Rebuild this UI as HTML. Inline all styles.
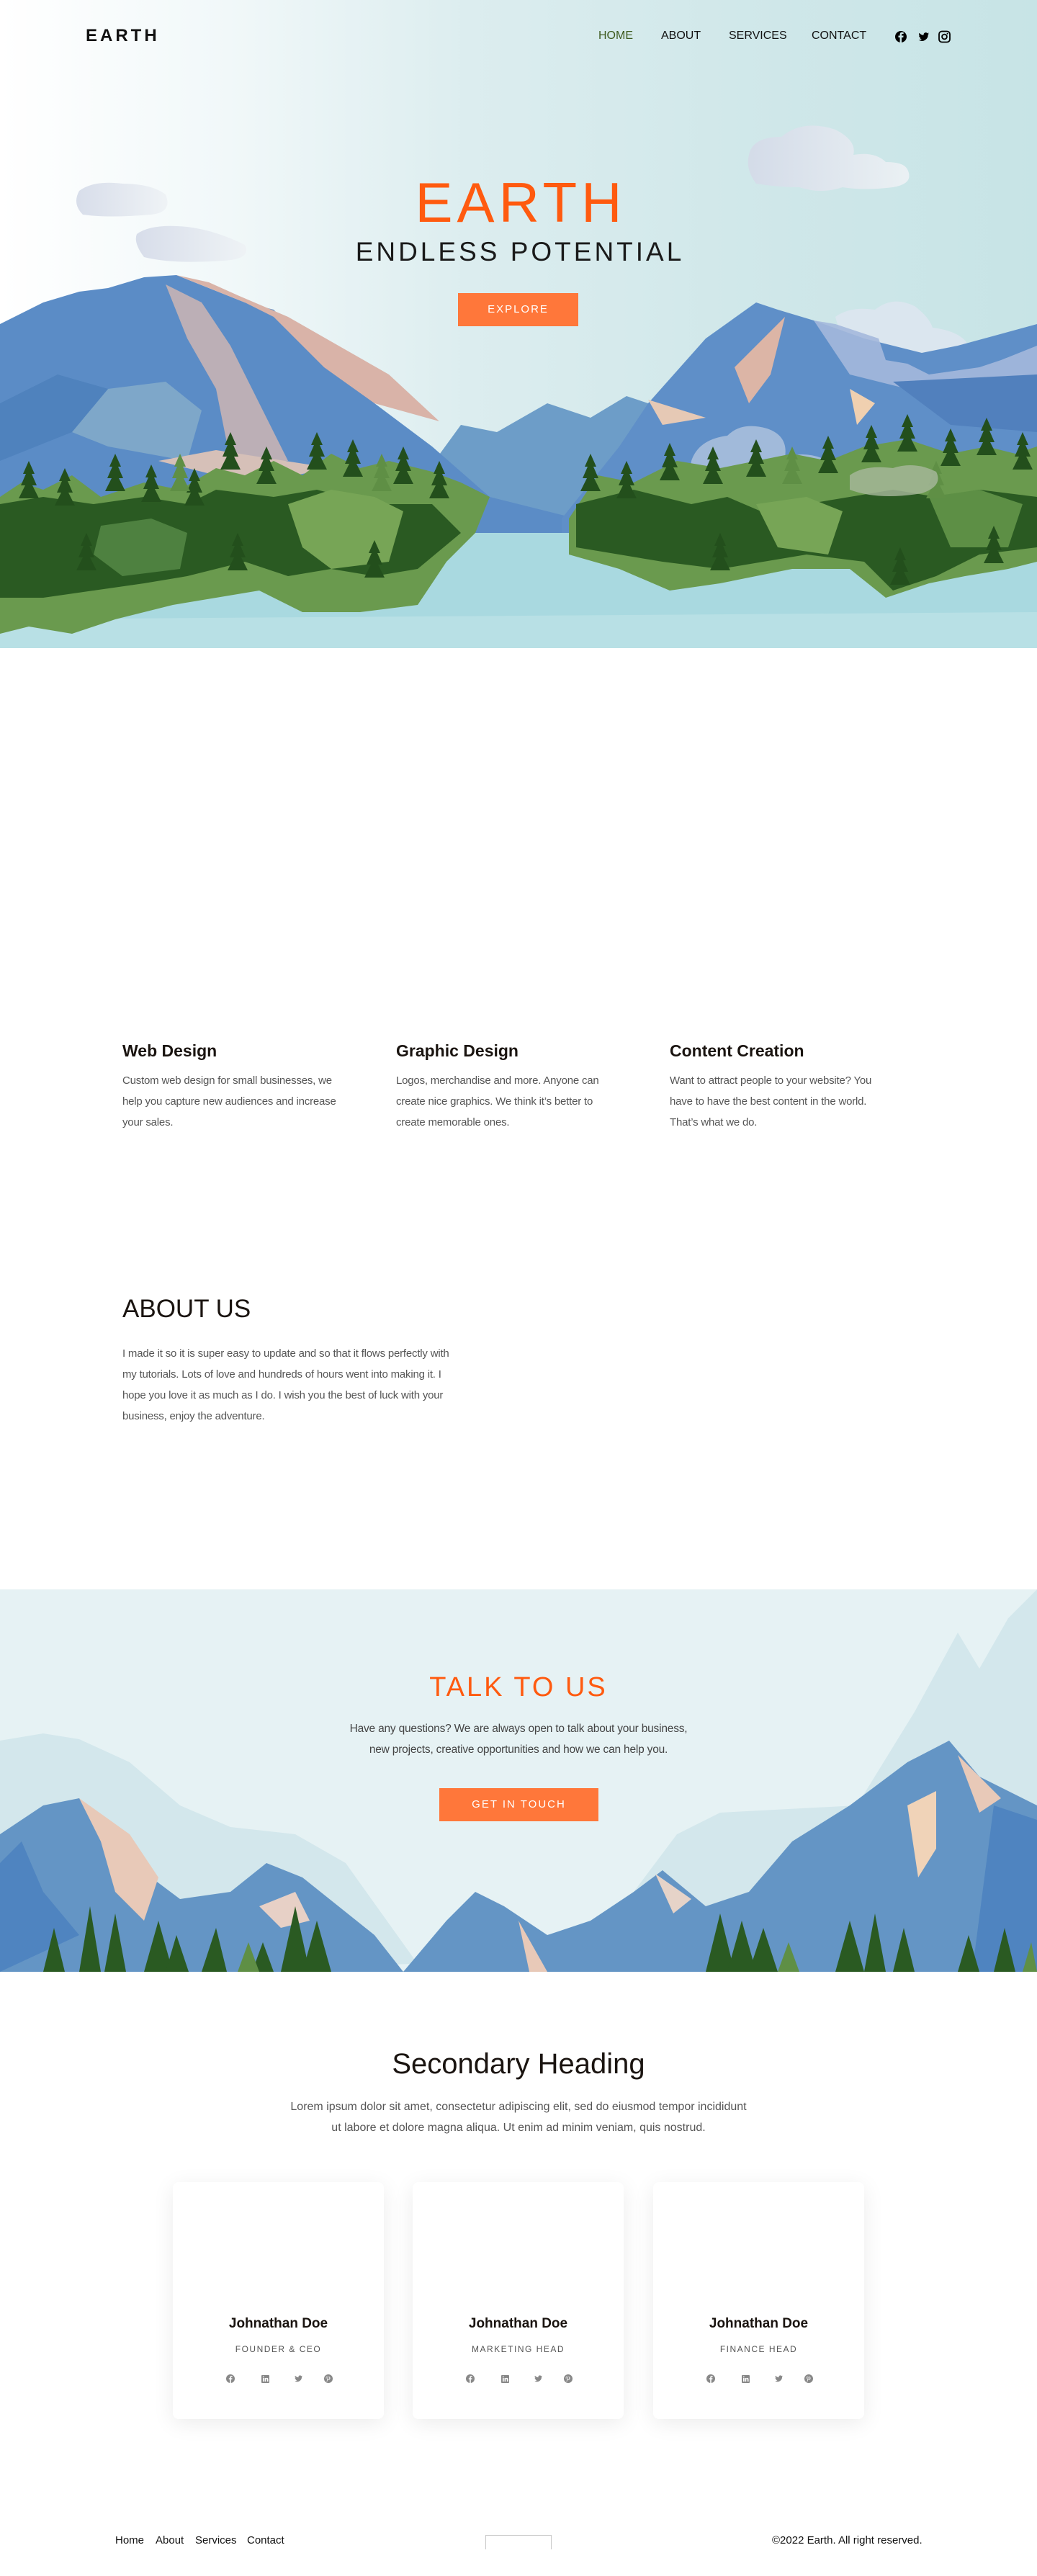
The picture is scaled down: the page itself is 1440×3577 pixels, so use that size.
<!DOCTYPE html>
<html><head><meta charset="utf-8"><style>
*{margin:0;padding:0;box-sizing:border-box}
body{width:1440px;height:3577px;background:#fff;font-family:"Liberation Sans",sans-serif;color:#1a1a1a;position:relative;overflow:hidden}
.abs{position:absolute}
.hero{position:absolute;left:0;top:0;width:1440px;height:900px;background:linear-gradient(90deg,#fff 0%,#f1f8f9 22%,#dcedef 45%,#cfe7e9 75%,#c7e4e6 100%);overflow:hidden}
.nav a{position:absolute;top:40px;font-size:16px;color:#111;text-decoration:none;line-height:20px}
.btn{position:absolute;background:#ff773a;color:#fff;text-align:center;letter-spacing:2px;font-size:15px}
.svc h3{position:absolute;font-size:23px;font-weight:600;color:#1a1410}
.svc p{position:absolute;font-size:15px;line-height:29px;color:#555;width:300px;letter-spacing:-0.2px}
.card{position:absolute;top:3030px;width:293px;height:329px;background:#fff;border-radius:8px;box-shadow:0 6px 30px rgba(0,0,0,0.08);text-align:center}
.card .n{position:absolute;top:186px;width:100%;font-size:19px;font-weight:600;color:#1a1410}
.card .r{position:absolute;top:225px;width:100%;font-size:12px;letter-spacing:1.5px;color:#555}
.card .ic{position:absolute;top:266px;left:73px;width:150px;height:14px}
.foot{position:absolute;top:3519px;font-size:15px;color:#111}
</style></head><body>
<div class="hero">
<svg width="1440" height="900" viewBox="0 0 1440 900" style="position:absolute;left:0;top:0">
<defs><linearGradient id="cl" x1="0" x2="1"><stop offset="0" stop-color="#d4dae8"/><stop offset="1" stop-color="#eef2f5"/></linearGradient>
<g id="tr"><path d="M0 0 L-8 18 L-4 18 L-11 34 L-5 34 L-14 52 L14 52 L5 34 L11 34 L4 18 L8 18z"/></g></defs>
<path d="M1040 215 q5-25 45-25 q30-25 75-10 q30 15 25 35 q30-5 45 10 q25 0 30 10 q10 20-20 25 q-40 5-70 0 q-30 10-60 0 q-30 0-60-5 q-15-20-10-40z" fill="url(#cl)" opacity=".9"/>
<path d="M110 265 q20-15 60-10 q40 0 60 15 q10 25-20 28 q-60 5-95 0 q-15-15-5-33z" fill="url(#cl)" opacity=".9"/>
<path d="M190 325 q20-15 70-10 q40 5 80 25 q10 20-30 22 q-70 5-110-5 q-15-20-10-32z" fill="url(#cl)" opacity=".9"/>
<path d="M1160 440 q20-15 55-10 q25-20 55-5 q20 15 25 30 q40 5 50 25 q-20 30-100 15 q-70 5-85-55z" fill="#dde6ef" opacity=".9"/>
<path d="M560 700 L640 590 L690 600 L760 560 L820 580 L870 550 L900 560 L960 520 L1050 600 L1100 640 L1100 760 L560 760z" fill="#6d9dc8"/>
<path d="M0 450 L60 420 L110 405 L150 400 L200 385 L245 382 L290 400 L340 420 L380 430 L450 500 L520 560 L600 620 L680 690 L800 720 L800 800 L0 800z" fill="#5b8cc6"/>
<path d="M245 382 L290 400 L340 420 L380 440 L450 510 L520 560 L610 585 L540 520 L470 480 L400 440 L330 410 L290 392z" fill="#d9b3a8"/>
<path d="M230 395 L260 470 L300 540 L320 640 L400 640 L360 560 L320 480 L280 420z" fill="#d5b8b1" opacity=".8"/>
<path d="M150 540 L230 530 L280 570 L260 640 L150 620 L100 600z" fill="#7ea7c9"/>
<path d="M0 560 L80 520 L150 540 L100 600 L0 640z" fill="#4f82bd"/>
<path d="M220 640 L300 625 L460 650 L410 660 L300 660z" fill="#d6c0b8"/>
<path d="M780 720 L860 620 L900 560 L980 470 L1050 420 L1080 430 L1130 445 L1200 470 L1280 490 L1330 480 L1440 450 L1440 800 L780 800z" fill="#5f8fc8"/>
<path d="M1130 445 L1160 450 L1220 470 L1230 500 L1260 505 L1290 520 L1360 510 L1390 500 L1440 480 L1440 520 L1260 540 L1180 520z" fill="#a4b8db" opacity=".9"/>
<path d="M1020 510 L1060 470 L1090 440 L1070 520 L1040 560z" fill="#dcb5a6"/>
<path d="M900 555 L980 580 L920 590z" fill="#e6c9b5"/>
<path d="M1180 540 L1215 560 L1190 590z" fill="#f0d0b0"/>
<path d="M1240 530 L1440 520 L1440 600 L1320 590z" fill="#5180bd"/>
<path d="M960 640 q10-30 50-35 q20-20 55-10 q30 10 25 40 q30-10 60 5 q30-5 50 10 q25 20-15 35 q-60 15-110 10 q-60 10-100-5 q-20-20-15-50z" fill="#a8bfdc" opacity=".9"/>
<rect x="0" y="740" width="1440" height="160" fill="#a9d9e0"/>
<path d="M0 860 L1440 850 L1440 900 L0 900z" fill="#b8e0e5"/>
<path d="M0 690 L30 670 L60 680 L100 660 L140 690 L200 670 L250 680 L300 650 L340 660 L380 640 L420 660 L460 630 L500 650 L540 640 L600 655 L640 670 L680 690 L660 740 L620 780 L580 840 L500 850 L420 850 L360 820 L300 830 L240 840 L160 860 L100 880 L40 870 L0 880z" fill="#6a9a4e"/>
<path d="M0 700 L60 690 L130 700 L200 690 L260 700 L300 680 L380 690 L440 680 L520 700 L600 700 L640 740 L580 790 L520 800 L460 790 L400 800 L340 780 L260 800 L200 810 L130 820 L60 830 L0 830z" fill="#2a5a22"/>
<path d="M400 700 L460 680 L520 690 L560 710 L540 780 L460 790 L420 760z" fill="#77a556"/>
<path d="M140 730 L210 720 L260 740 L250 790 L170 800 L130 770z" fill="#4e8140"/>
<path d="M790 720 L830 660 L880 670 L940 640 L1000 650 L1050 640 L1100 630 L1150 640 L1200 620 L1260 610 L1320 630 L1370 620 L1410 630 L1440 620 L1440 780 L1400 790 L1340 800 L1290 810 L1230 830 L1180 790 L1100 790 L1000 810 L930 820 L860 790 L790 770z" fill="#6a9a4e"/>
<path d="M800 700 L880 680 L960 700 L1010 690 L1080 720 L1120 700 L1180 690 L1240 680 L1300 690 L1360 680 L1440 690 L1440 760 L1360 770 L1300 800 L1240 820 L1200 780 L1120 770 L1060 780 L1000 790 L920 780 L860 770 L800 760z" fill="#2a5a22"/>
<path d="M1050 700 L1120 690 L1170 710 L1150 770 L1080 760z" fill="#77a556"/>
<path d="M1290 690 L1360 680 L1420 700 L1400 760 L1320 760z" fill="#5d8f45"/>
<g fill="#234f1c">
<use href="#tr" x="40" y="640"/><use href="#tr" x="90" y="650"/><use href="#tr" x="160" y="630"/><use href="#tr" x="210" y="645"/><use href="#tr" x="320" y="600"/><use href="#tr" x="370" y="620"/><use href="#tr" x="440" y="600"/><use href="#tr" x="490" y="610"/><use href="#tr" x="560" y="620"/><use href="#tr" x="610" y="640"/><use href="#tr" x="270" y="650"/>
<use href="#tr" x="820" y="630"/><use href="#tr" x="870" y="640"/><use href="#tr" x="930" y="615"/><use href="#tr" x="990" y="620"/><use href="#tr" x="1050" y="610"/><use href="#tr" x="1210" y="590"/><use href="#tr" x="1260" y="575"/><use href="#tr" x="1320" y="595"/><use href="#tr" x="1370" y="580"/><use href="#tr" x="1420" y="600"/><use href="#tr" x="1150" y="605"/>
<use href="#tr" x="120" y="740"/><use href="#tr" x="330" y="740"/><use href="#tr" x="520" y="750"/><use href="#tr" x="1000" y="740"/><use href="#tr" x="1250" y="760"/><use href="#tr" x="1380" y="730"/>
</g>
<g fill="#5f8f45"><use href="#tr" x="250" y="630"/><use href="#tr" x="530" y="630"/><use href="#tr" x="1100" y="620"/><use href="#tr" x="1300" y="640"/></g>
<path d="M1180 660 q20-15 60-10 q30-10 60 5 q10 20-20 30 q-60 10-100-5z" fill="#a8b89c" opacity=".8"/>
</svg>
<div class="abs" style="left:119px;top:36px;font-size:24px;font-weight:700;letter-spacing:4px;color:#111">EARTH</div>
<div class="nav">
<a style="left:831px;color:#3d5a1e">HOME</a>
<a style="left:918px">ABOUT</a>
<a style="left:1012px">SERVICES</a>
<a style="left:1127px">CONTACT</a>
</div>
<svg class="abs" style="left:1242px;top:42px" width="78" height="18" viewBox="0 0 78 18">
<circle cx="9" cy="9" r="8" fill="#000"/><path d="M10 17 V10 H12.3 L12.6 7.5 H10 V6 Q10 5 11 5 H12.7 V3 Q11.5 2.8 10.5 2.8 Q7.6 2.8 7.6 5.8 V7.5 H5.5 V10 H7.6 V17z" fill="#cbe5e8"/>
<path d="M48 4.5 q-0.8 .4-1.7 .5 q1-.6 1.3-1.6 q-.9 .5-1.9 .7 a3 3 0 0 0-5.1 2.7 q-3.500-.2-6.100-3.100 a3 3 0 0 0 .9 4 q-.7 0-1.300-.4 a3 3 0 0 0 2.400 2.900 q-.7 .2-1.300 .1 a3 3 0 0 0 2.800 2 a6 6 0 0 1-4.400 1.200 a8.500 8.500 0 0 0 13.100-7.600 q.9-.6 1.500-1.500z" fill="#000"/>
<rect x="62" y="1.5" width="15" height="15" rx="4" fill="none" stroke="#000" stroke-width="1.8"/><circle cx="69.5" cy="9" r="3.4" fill="none" stroke="#000" stroke-width="1.8"/><circle cx="73.6" cy="4.8" r="1" fill="#000"/>
</svg>
<div class="abs" style="left:0;width:1440px;top:236px;text-align:center;font-size:78px;font-weight:400;letter-spacing:6px;color:#ff5a0f;line-height:90px;padding-left:6px">EARTH</div>
<div class="abs" style="left:0;width:1440px;top:328px;text-align:center;font-size:37px;font-weight:300;letter-spacing:4px;color:#1a1a1a;line-height:44px;padding-left:4px">ENDLESS POTENTIAL</div>
<div class="btn" style="left:636px;top:407px;width:167px;height:46px;line-height:46px">EXPLORE</div>
</div>

<div class="svc">
<h3 style="left:170px;top:1446px">Web Design</h3>
<p style="left:170px;top:1486px">Custom web design for small businesses, we help you capture new audiences and increase your sales.</p>
<h3 style="left:550px;top:1446px">Graphic Design</h3>
<p style="left:550px;top:1486px">Logos, merchandise and more. Anyone can create nice graphics. We think it’s better to create memorable ones.</p>
<h3 style="left:930px;top:1446px">Content Creation</h3>
<p style="left:930px;top:1486px;width:310px">Want to attract people to your website? You have to have the best content in the world. That’s what we do.</p>
<h3 style="left:170px;top:1798px;font-size:35px;font-weight:400">ABOUT US</h3>
<p style="left:170px;top:1865px;width:475px">I made it so it is super easy to update and so that it flows perfectly with my tutorials. Lots of love and hundreds of hours went into making it. I hope you love it as much as I do. I wish you the best of luck with your business, enjoy the adventure.</p>
</div>

<div class="abs" style="left:0;top:2207px;width:1440px;height:531px;background:#e6f2f4;overflow:hidden">
<svg width="1440" height="531" viewBox="0 0 1440 531" style="position:absolute;left:0;top:0">
<path d="M0 210 L60 200 L110 208 L180 240 L250 300 L320 330 L410 340 L480 380 L530 450 L580 520 L0 531z" fill="#d3e7ec"/>
<path d="M1440 0 L1440 531 L820 531 L880 420 L940 340 L1000 310 L1190 300 L1270 170 L1330 60 L1360 110 L1400 40z" fill="#d3e7ec"/>
<path d="M0 340 L60 300 L110 290 L160 340 L210 400 L250 430 L320 420 L370 380 L420 400 L470 440 L520 480 L560 531 L0 531z" fill="#6495c5"/>
<path d="M0 380 L30 350 L60 420 L110 480 L0 531z" fill="#4f84c0"/>
<path d="M110 290 L140 350 L160 420 L200 460 L220 400 L180 340z" fill="#e8c9b8"/>
<path d="M360 440 L410 420 L430 460 L390 470z" fill="#e7d0c6"/>
<path d="M560 531 L620 460 L660 420 L700 440 L760 480 L820 460 L880 420 L920 390 L980 440 L1040 420 L1100 350 L1180 300 L1260 240 L1318 210 L1360 260 L1400 280 L1440 300 L1440 531z" fill="#6495c5"/>
<path d="M910 395 L960 430 L935 450z" fill="#e6d3c8"/>
<path d="M1260 300 L1300 280 L1300 360 L1275 400z" fill="#f0d3b8"/>
<path d="M1330 230 L1390 290 L1360 310z" fill="#e8c9b8"/>
<path d="M1380 300 L1440 320 L1440 531 L1350 531z" fill="#4f84c0"/>
<path d="M720 460 L735 531 L760 531z" fill="#e8c9b8"/>
<g fill="#2a5a22">
<path d="M60 531 L75 470 L90 531z"/><path d="M110 531 L125 440 L140 531z"/><path d="M145 531 L160 450 L175 531z"/>
<path d="M200 531 L220 460 L240 531z"/><path d="M230 531 L245 480 L262 531z"/><path d="M280 531 L300 470 L315 531z"/>
<path d="M390 531 L410 440 L430 531z"/><path d="M420 531 L440 460 L460 531z"/><path d="M350 531 L365 490 L380 531z"/>
<path d="M980 531 L1000 450 L1020 531z"/><path d="M1010 531 L1030 460 L1050 531z"/><path d="M1040 531 L1060 470 L1080 531z"/>
<path d="M1160 531 L1180 460 L1200 531z"/><path d="M1200 531 L1215 450 L1230 531z"/><path d="M1240 531 L1255 470 L1270 531z"/>
<path d="M1330 531 L1345 480 L1360 531z"/><path d="M1380 531 L1395 470 L1410 531z"/>
</g>
<g fill="#5f8f45"><path d="M330 531 L345 490 L360 531z"/><path d="M1080 531 L1095 490 L1110 531z"/><path d="M1420 531 L1432 490 L1440 531z"/></g>
</svg>
<div class="abs" style="left:0;width:1440px;top:113px;text-align:center;font-size:38px;letter-spacing:3px;color:#ff5a0f;line-height:46px">TALK TO US</div>
<div class="abs" style="left:0;width:1440px;top:179px;text-align:center;font-size:15.5px;line-height:29px;color:#444;letter-spacing:-0.2px">Have any questions? We are always open to talk about your business,<br>new projects, creative opportunities and how we can help you.</div>
<div class="btn" style="left:610px;top:276px;width:221px;height:46px;line-height:46px">GET IN TOUCH</div>
</div>

<div class="abs" style="left:0;width:1440px;top:2840px;text-align:center;font-size:40px;color:#1a1410;line-height:52px">Secondary Heading</div>
<div class="abs" style="left:0;width:1440px;top:2911px;text-align:center;font-size:16px;line-height:29px;color:#555">Lorem ipsum dolor sit amet, consectetur adipiscing elit, sed do eiusmod tempor incididunt<br>ut labore et dolore magna aliqua. Ut enim ad minim veniam, quis nostrud.</div>

<svg width="0" height="0" style="position:absolute"><defs>
<g id="ics" fill="#888">
<circle cx="7" cy="7" r="6"/><path d="M7.8 13 V8 H9.3 L9.5 6.4 H7.8 V5.4 Q7.8 4.700 8.500 4.700 H9.6 V3.300 Q8.800 3.200 8.100 3.200 Q6.200 3.200 6.200 5.200 V6.400 H4.800 V8 H6.200 V13z" fill="#fff"/>
<rect x="50" y="2" width="11" height="11" rx="1"/><path d="M52 6 h1.6 v5 h-1.6z M52.800 3.600 a.9 .9 0 1 1 0 1.800 a.9 .9 0 1 1 0-1.800z M54.600 6 h1.500 v.8 q.5-.9 1.700-.9 q1.700 0 1.700 2.100 v3 h-1.600 v-2.800 q0-.9-.8-.9 q-.9 0-.9 1 v2.700 h-1.600z" fill="#fff"/>
<path d="M107 3.500 q-.6 .3-1.300 .4 q.7-.4 1-1.200 q-.7 .4-1.400 .5 a2.200 2.200 0 0 0-3.800 2 q-2.700-.1-4.600-2.300 a2.200 2.200 0 0 0 .7 3 q-.5 0-1-.3 a2.200 2.200 0 0 0 1.800 2.200 q-.5 .1-1 0 a2.200 2.200 0 0 0 2.100 1.500 a4.500 4.500 0 0 1-3.300 .9 a6.400 6.400 0 0 0 9.800-5.700 q.7-.5 1-1z"/>
<circle cx="143" cy="7" r="6"/><path d="M142.500 4 q2.700-.3 3 2 q.2 2.500-2.200 2.700 q-.9 0-1.200-.6 l-.8 3 h-.8 l1.200-4.800 q-.3-.8.2-1.300 q.6-.3.700.6 l-.4 1.700 q.2.8 1 .7 q1.400-.3 1.200-2.200 q-.3-1.800-2.400-1.500 q-1.900.4-1.800 2.200 l.3.6 q-.9.1-.9-1 q0-2 2.100-2.300z" fill="#fff"/>
</g></defs></svg>

<div class="card" style="left:240px"><div class="n">Johnathan Doe</div><div class="r">FOUNDER &amp; CEO</div><svg class="ic" viewBox="0 0 150 14"><use href="#ics"/></svg></div>
<div class="card" style="left:573px"><div class="n">Johnathan Doe</div><div class="r">MARKETING HEAD</div><svg class="ic" viewBox="0 0 150 14"><use href="#ics"/></svg></div>
<div class="card" style="left:907px"><div class="n">Johnathan Doe</div><div class="r">FINANCE HEAD</div><svg class="ic" viewBox="0 0 150 14"><use href="#ics"/></svg></div>

<div class="foot" style="left:160px">Home</div>
<div class="foot" style="left:216px">About</div>
<div class="foot" style="left:271px">Services</div>
<div class="foot" style="left:343px">Contact</div>
<div class="abs" style="left:674px;top:3520px;width:92px;height:20px;border:1px solid #c8c8c8;border-bottom:none"></div>
<div class="foot" style="left:1072px">©2022 Earth. All right reserved.</div>
</body></html>
